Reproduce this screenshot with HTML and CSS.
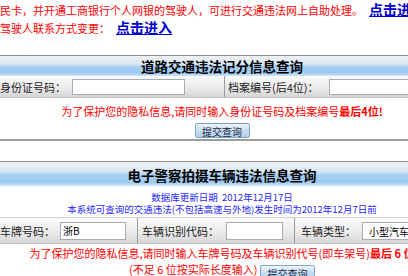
FILE: index.html
```html
<!DOCTYPE html>
<html lang="zh-CN">
<head>
    <meta charset="UTF-8">
    <meta name="viewport" content="width=device-width, initial-scale=1.0">
    <title>交通违法查询</title>
    <link rel="stylesheet" href="styles.css">
</head>
<body>
    <div class="page">
        <p class="notice">民卡，并开通工商银行个人网银的驾驶人，可进行交通违法网上自助处理。<a href="#" class="go">点击进入</a></p>
        <p class="notice">驾驶人联系方式变更：<a href="#" class="go">点击进入</a></p>

        <!-- 记分查询 -->
        <div class="box">
            <div class="box-head">道路交通违法记分信息查询</div>
            <div class="fields fields-score">
                <div class="cell cell-id">
                    <label for="sfzh">身份证号码：</label>
                    <input type="text" id="sfzh" class="input-id">
                </div>
                <div class="cell cell-file">
                    <label for="dabh">档案编号(后4位)：</label>
                    <input type="text" id="dabh" class="input-file">
                </div>
            </div>
            <div class="hint hint-score">
                <p class="warn">为了保护您的隐私信息,请同时输入身份证号码及档案编号<b>最后4位!</b></p>
                <button type="button" class="btn">提交查询</button>
            </div>
        </div>

        <!-- 电子警察 -->
        <div class="box box-car">
            <div class="box-head box-head-tall">电子警察拍摄车辆违法信息查询</div>
            <div class="info">
                <p>数据库更新日期&nbsp; 2012年12月17日</p>
                <p>本系统可查询的交通违法(不包括高速与外地)发生时间为2012年12月7日前</p>
            </div>
            <div class="fields fields-car">
                <div class="cell cell-plate">
                    <label for="hphm">车牌号码：</label>
                    <input type="text" id="hphm" class="input-plate" value="浙B">
                </div>
                <div class="cell cell-vin">
                    <label for="clsbdh">车辆识别代码：</label>
                    <input type="text" id="clsbdh" class="input-vin">
                </div>
                <div class="cell cell-type">
                    <label for="hpzl">车辆类型：</label>
                    <select id="hpzl" class="select-type">
                        <option>小型汽车</option>
                        <option>大型汽车</option>
                    </select>
                </div>
            </div>
            <div class="hint hint-car">
                <p class="warn">为了保护您的隐私信息,请同时输入车牌号码及车辆识别代号(即车架号)<b>最后 6 位</b></p>
                <p class="warn warn-last">(不足 6 位按实际长度输入) <button type="button" class="btn">提交查询</button></p>
            </div>
        </div>
    </div>
</body>
</html>
```

FILE: styles.css
```css
/* 页面基础 */
body {
    margin: 0;
    font-family: "Noto Sans CJK SC", "Liberation Sans", sans-serif;
    background: #fff;
    overflow: hidden;
}

.page {
    width: 444px;
}

p {
    margin: 0;
}

/* 顶部提示 */
.notice {
    height: 18px;
    line-height: 18px;
    font-size: 11px;
    color: #f00;
    white-space: nowrap;
}

.go {
    margin-left: 6px;
    font-size: 14px;
    font-weight: bold;
    color: #0000cc;
    text-decoration: underline;
}

/* 查询框 */
.box {
    margin-top: 19px;
    border-top: 1px solid #8c8c8c;
    border-bottom: 2px solid #9c9c9c;
}

.box-car {
    margin-top: 20px;
}

.box-head {
    height: 20px;
    line-height: 20px;
    text-align: center;
    font-size: 13.5px;
    font-weight: bold;
    color: #000;
    background: linear-gradient(to bottom, #eef2f6 0%, #dbe6f1 40%, #a3cdf2 55%, #9fcaf2 85%, #cfe5f9 100%);
}

.box-head-tall {
    height: 24px;
    line-height: 26px;
}

/* 输入行 */
.fields {
    display: flex;
    align-items: stretch;
    height: 21px;
    font-size: 11px;
    color: #222;
    background: linear-gradient(to bottom, #fbfbfb, #ebebeb 55%, #d6d6d6);
    border-bottom: 1px solid #c4c4c4;
}

.fields-car {
    height: 25px;
}

.cell {
    display: flex;
    align-items: center;
    white-space: nowrap;
    box-sizing: border-box;
}

.cell-id {
    width: 225px;
    border-right: 1px solid #9a9a9a;
}

.cell-file {
    padding-left: 3px;
    flex: 1;
}

.cell-plate {
    width: 138px;
    border-right: 1px solid #9a9a9a;
}

.cell-vin {
    width: 157px;
    padding-left: 4px;
    border-right: 1px solid #9a9a9a;
}

.cell-type {
    padding-left: 6px;
    flex: 1;
}

input, select {
    height: 16px;
    box-sizing: border-box;
    border: 1px solid #a5acb5;
    background: #fff;
    font-family: inherit;
    font-size: 10px;
    padding: 0 2px;
}

.input-id {
    margin-left: 6px;
    width: 113px;
}

.input-file {
    margin-left: 10px;
    width: 110px;
}

.input-plate {
    margin-left: 5px;
    width: 66px;
    height: 18px;
}

.input-vin {
    margin-left: 7px;
    width: 57px;
    height: 18px;
}

.select-type {
    margin-left: 6px;
    width: 72px;
    height: 18px;
}

/* 提示及按钮 */
.hint {
    text-align: center;
    font-size: 11px;
}

.hint-score {
    padding-top: 5px;
    height: 36px;
}

.hint-car {
    padding-top: 2px;
}

.warn {
    color: #f00;
    line-height: 16px;
    white-space: nowrap;
}

.hint-car .warn {
    line-height: 14px;
}

.hint-car .warn-last {
    margin-top: 2px;
}

.btn {
    width: 55px;
    height: 15px;
    margin-top: 2px;
    padding: 0;
    font-family: inherit;
    font-size: 10px;
    color: #1a2a40;
    border: 1px solid #7fa3c8;
    border-radius: 2px;
    background: linear-gradient(to bottom, #eef5fc, #c9def3 50%, #b2d0ee);
    vertical-align: middle;
}

/* 更新信息 */
.info {
    padding: 5px 0 2px;
    text-align: center;
    font-size: 9.5px;
    line-height: 12px;
    color: #1f1fff;
    border-bottom: 1px solid #d4d4d4;
    white-space: nowrap;
}
```
